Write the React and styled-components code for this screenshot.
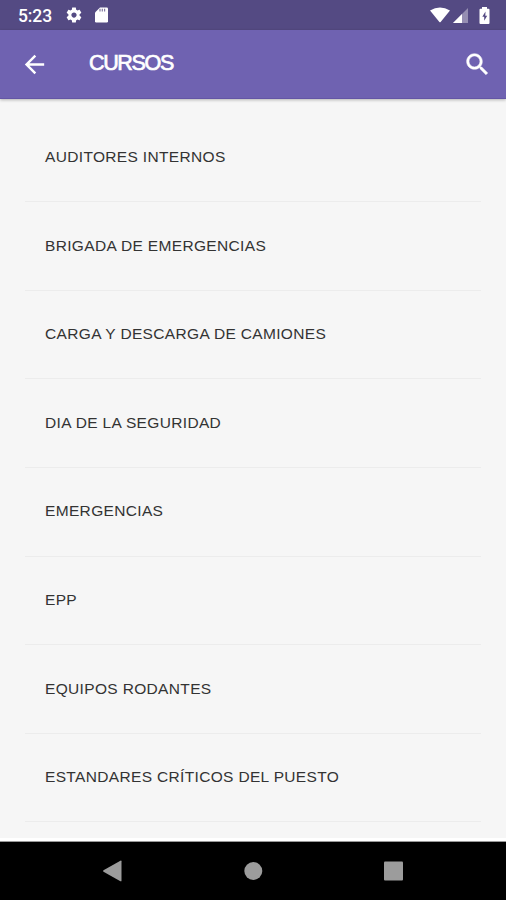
import React from "react";
import styled, { createGlobalStyle } from "styled-components";

const GlobalStyle = createGlobalStyle`
  * { box-sizing: border-box; }
  body { margin: 0; background: #f6f6f6; }
  svg { display: block; }
`;

const Screen = styled.div`
  display: flex;
  flex-direction: column;
  width: 506px;
  height: 900px;
  overflow: hidden;
  background: #f6f6f6;
  font-family: "Liberation Sans", Arial, sans-serif;
`;

const StatusBar = styled.div`
  display: flex;
  flex: none;
  align-items: center;
  height: 30px;
  padding: 0 16px 0 18px;
  background: #544a83;
  color: #fff;
`;

const Clock = styled.span`
  width: 47px;
  padding-top: 2px;
  font: 500 17.5px/30px Roboto, sans-serif;
  letter-spacing: -0.1px;
`;

const StatusGroup = styled.div`
  display: flex;
  align-items: center;
  gap: ${(p) => p.$gap}px;
  margin-left: ${(p) => (p.$end ? "auto" : "0")};
`;

const Header = styled.header`
  display: flex;
  flex: none;
  align-items: center;
  height: 69px;
  padding: 0 14px 0 20px;
  background: #6f62b1;
  border-bottom: 1px solid #6456a5;
  box-shadow: 0 1px 3px rgba(0, 0, 0, 0.28);
  color: #fff;
  z-index: 1;
`;

const IconButton = styled.button`
  display: flex;
  padding: 0;
  border: 0;
  background: none;
  color: inherit;
`;

const Title = styled.h1`
  flex: 1;
  margin: 0 0 3px 40px;
  font-size: 21.5px;
  font-weight: 400;
  line-height: 28px;
  letter-spacing: -1.35px;
  -webkit-text-stroke: 0.7px #fff;
`;

const List = styled.ul`
  flex: 1;
  margin: 0;
  padding: 14.7px 25px 0;
  list-style: none;
  border-bottom: 3px solid #fff;
`;

const Row = styled.li`
  display: flex;
  align-items: center;
  height: 88.6px;
  padding: 0 20px 0.8px;
  border-bottom: 1px solid #ececec;
  color: #333;
  font-size: 15.5px;
  line-height: 20px;
  letter-spacing: 0.34px;
  white-space: nowrap;
`;

const NavBar = styled.nav`
  display: flex;
  flex: none;
  justify-content: space-between;
  height: 59px;
  padding: 18px 102px 0;
  background: #000;
  border-top: 1px solid #999;
  color: #9c9c9c;
`;

const Glyph = ({ w, h = w, box = "0 0 24 24", children }) => (
  <svg width={w} height={h} viewBox={box} fill="currentColor" aria-hidden="true">
    {children}
  </svg>
);

const courses = [
  "AUDITORES INTERNOS",
  "BRIGADA DE EMERGENCIAS",
  "CARGA Y DESCARGA DE CAMIONES",
  "DIA DE LA SEGURIDAD",
  "EMERGENCIAS",
  "EPP",
  "EQUIPOS RODANTES",
  "ESTANDARES CRÍTICOS DEL PUESTO",
];

export default function App() {
  return (
    <>
      <GlobalStyle />
      <Screen>
        <StatusBar>
          <Clock>5:23</Clock>
          <StatusGroup $gap={12}>
            <Glyph w={18}>
              <path d="M19.43 12.98c.04-.32.07-.64.07-.98s-.03-.66-.07-.98l2.11-1.65c.19-.15.24-.42.12-.64l-2-3.46c-.12-.22-.39-.3-.61-.22l-2.49 1c-.52-.4-1.08-.73-1.69-.98l-.38-2.65C14.46 2.18 14.25 2 14 2h-4c-.25 0-.46.18-.49.42l-.38 2.65c-.61.25-1.17.59-1.69.98l-2.49-1c-.23-.09-.49 0-.61.22l-2 3.46c-.13.22-.07.49.12.64l2.11 1.65c-.04.32-.07.65-.07.98s.03.66.07.98l-2.11 1.65c-.19.15-.24.42-.12.64l2 3.46c.12.22.39.3.61.22l2.49-1c.52.4 1.08.73 1.69.98l.38 2.65c.03.24.24.42.49.42h4c.25 0 .46-.18.49-.42l.38-2.65c.61-.25 1.17-.59 1.69-.98l2.49 1c.23.09.49 0 .61-.22l2-3.46c.12-.22.07-.49-.12-.64l-2.11-1.65zM12 15.5c-1.93 0-3.5-1.57-3.5-3.5s1.57-3.5 3.5-3.5 3.5 1.57 3.5 3.5-1.57 3.5-3.5 3.5z" />
            </Glyph>
            <Glyph w={13} h={16} box="0 0 13 16">
              <path d="M5 .5h6.8Q13 .5 13 1.7v12.6q0 1.2-1.2 1.2H1.2Q0 15.5 0 14.3V5.5z" />
              <path d="M5 1.8v2.6M7.3 1.8v2.6M9.6 1.8v2.6" stroke="#81799f" strokeWidth="1.2" />
            </Glyph>
          </StatusGroup>
          <StatusGroup $end $gap={3}>
            <Glyph w={20} h={16} box="0 0 20 16">
              <path d="M0 3.5Q10-2.5 20 3.5L10.6 15q-.6.7-1.2 0z" />
            </Glyph>
            <Glyph w={15} h={15} box="0 0 15 15">
              <path d="M15 0v15H0z" opacity=".38" />
              <path d="M9 6v9H0z" />
            </Glyph>
            <Glyph w={19} h={17} box="-8 0 19 17">
              <path d="M3 1.8V0h5v1.8h1.5q1 0 1 1V16q0 1-1 1h-8q-1 0-1-1V2.8q0-1 1-1z" />
              <path d="M6.5 4.5 3.3 9.7h1.9v4.1l3-5.1H6.3z" fill="#544a83" />
            </Glyph>
          </StatusGroup>
        </StatusBar>
        <Header>
          <IconButton aria-label="Volver">
            <Glyph w={29}>
              <path d="M20 11H7.83l5.59-5.59L12 4l-8 8 8 8 1.41-1.41L7.83 13H20v-2z" />
            </Glyph>
          </IconButton>
          <Title>CURSOS</Title>
          <IconButton aria-label="Buscar">
            <Glyph w={29}>
              <path d="M15.5 14h-.79l-.28-.27C15.41 12.59 16 11.11 16 9.5 16 5.91 13.09 3 9.5 3S3 5.91 3 9.5 5.91 16 9.5 16c1.61 0 3.09-.59 4.23-1.57l.27.28v.79l5 4.99L20.49 19l-4.99-5zm-6 0C7.01 14 5 11.99 5 9.5S7.01 5 9.5 5 14 7.01 14 9.5 11.99 14 9.5 14z" stroke="currentColor" strokeWidth=".4" />
            </Glyph>
          </IconButton>
        </Header>
        <List>
          {courses.map((name) => (
            <Row key={name}>{name}</Row>
          ))}
        </List>
        <NavBar>
          <Glyph w={20} h={22} box="0 0 20 22">
            <path d="M1.5 10.2 18.4.7q1.1-.5 1.1.6v19.4q0 1-1.1.5L1.5 11.7q-1-.8 0-1.5z" />
          </Glyph>
          <Glyph w={20} h={22} box="0 0 20 22">
            <circle cx="10.3" cy="11" r="9" />
          </Glyph>
          <Glyph w={20} h={22} box="0 0 20 22">
            <rect x="0" y="1.5" width="19" height="19" rx="1" />
          </Glyph>
        </NavBar>
      </Screen>
    </>
  );
}
